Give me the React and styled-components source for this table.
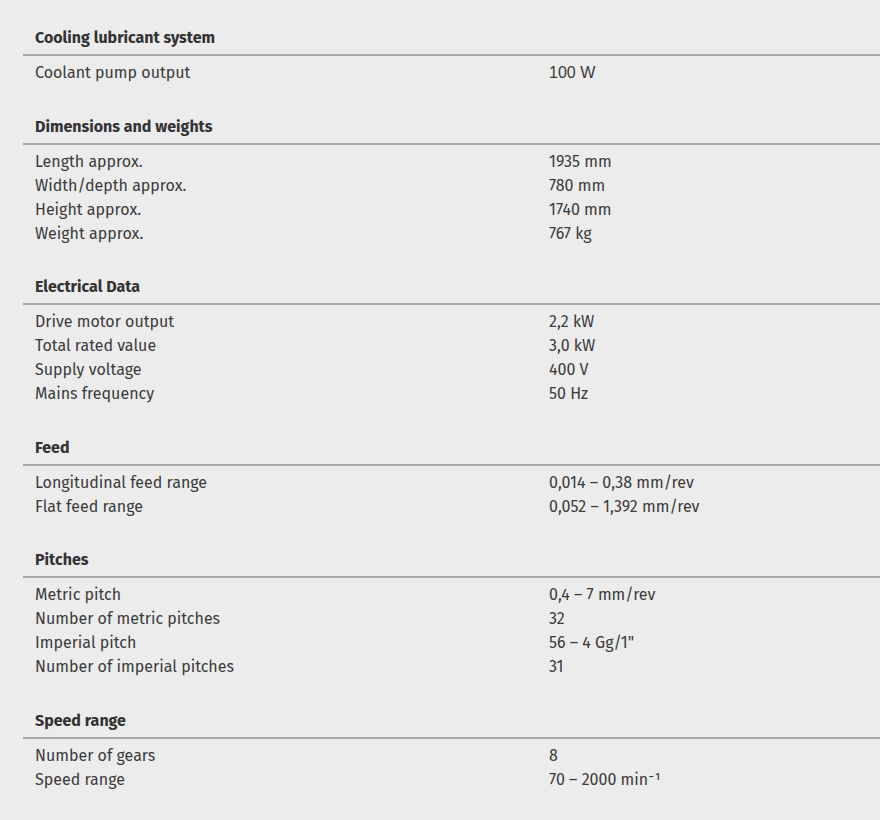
import React from "react";
import styled, { createGlobalStyle } from "styled-components";

const Global = createGlobalStyle`
  html, body { margin: 0; padding: 0; background: #ececec; }
  body { font-family: "Fira Sans", Lato, "Open Sans", sans-serif; color: #3b3b3b; }
`;

const Page = styled.div`
  padding: 26px 0 20px 23px;
  display: flex;
  flex-direction: column;
  gap: 29.5px;
`;

const Section = styled.section`
  display: flex;
  flex-direction: column;
`;

const Heading = styled.h3`
  margin: 0;
  padding: 0 12px 4px;
  font-size: 16px;
  line-height: 24px;
  font-weight: 700;
  color: #333;
  border-bottom: 2px solid #a9a9a9;
`;

const Rows = styled.div`
  margin-top: 5px;
  display: flex;
  flex-direction: column;
`;

const Row = styled.div`
  display: grid;
  grid-template-columns: 514px 1fr;
  padding-left: 12px;
  font-size: 16px;
  line-height: 24px;
`;

const Label = styled.span``;

const Value = styled.span`
  font-family: ${(p) => (p.$alt ? '"Liberation Sans", Arial, sans-serif' : "inherit")};
`;

const data = [
  ["Cooling lubricant system", [["Coolant pump output", "100 W", true]]],
  [
    "Dimensions and weights",
    [
      ["Length approx.", "1935 mm"],
      ["Width/depth approx.", "780 mm"],
      ["Height approx.", "1740 mm"],
      ["Weight approx.", "767 kg"],
    ],
  ],
  [
    "Electrical Data",
    [
      ["Drive motor output", "2,2 kW"],
      ["Total rated value", "3,0 kW"],
      ["Supply voltage", "400 V"],
      ["Mains frequency", "50 Hz"],
    ],
  ],
  [
    "Feed",
    [
      ["Longitudinal feed range", "0,014 – 0,38 mm/rev"],
      ["Flat feed range", "0,052 – 1,392 mm/rev"],
    ],
  ],
  [
    "Pitches",
    [
      ["Metric pitch", "0,4 – 7 mm/rev"],
      ["Number of metric pitches", "32"],
      ["Imperial pitch", "56 – 4 Gg/1\""],
      ["Number of imperial pitches", "31"],
    ],
  ],
  [
    "Speed range",
    [
      ["Number of gears", "8"],
      ["Speed range", "70 – 2000 min⁻¹"],
    ],
  ],
];

export default function App() {
  return (
    <>
      <Global />
      <Page>
        {data.map(([title, rows]) => (
          <Section key={title}>
            <Heading>{title}</Heading>
            <Rows>
              {rows.map(([l, v, alt]) => (
                <Row key={l}>
                  <Label>{l}</Label>
                  <Value $alt={alt}>{v}</Value>
                </Row>
              ))}
            </Rows>
          </Section>
        ))}
      </Page>
    </>
  );
}
